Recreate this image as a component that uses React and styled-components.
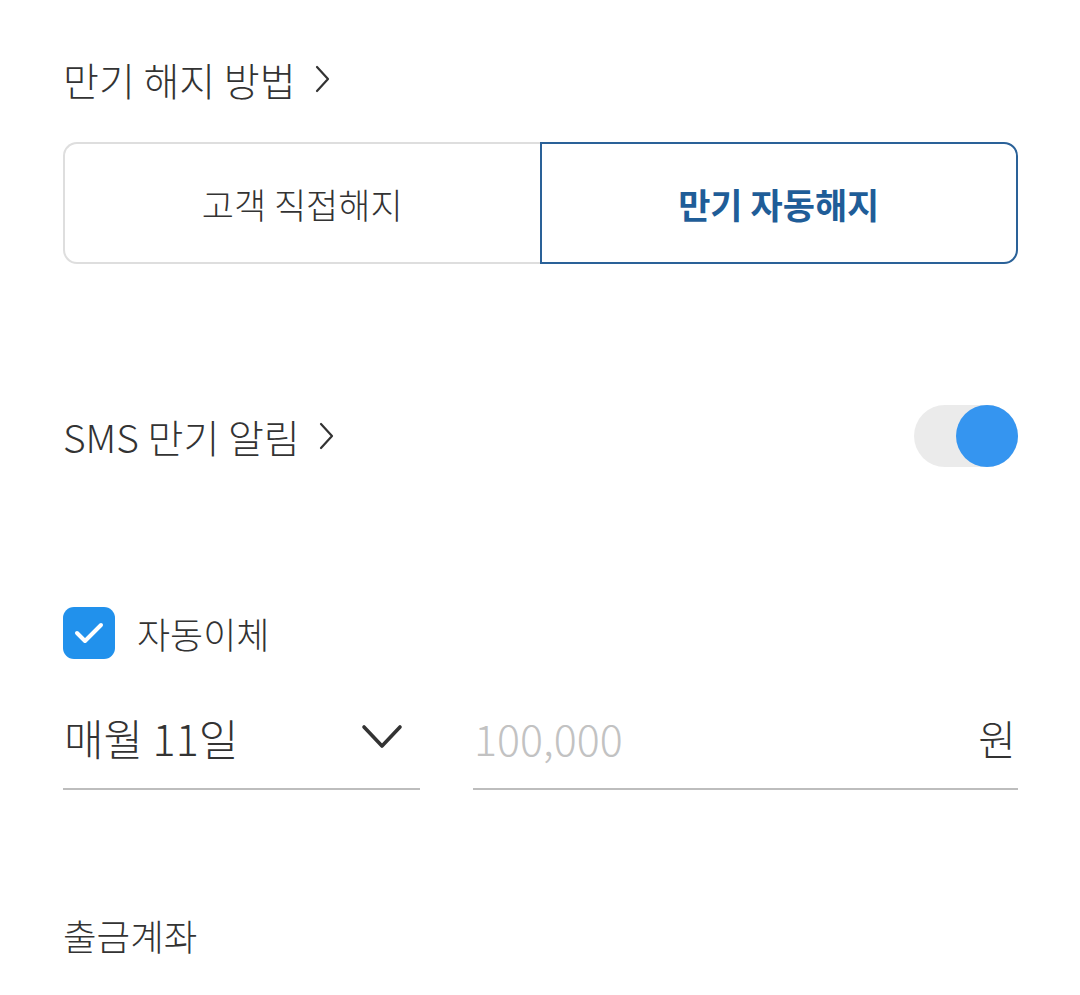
import React, { useState } from "react";
import styled, { createGlobalStyle } from "styled-components";

const Global = createGlobalStyle`
  html, body { margin: 0; padding: 0; background: #ffffff; }
  body { font-family: "Noto Sans CJK KR", "Noto Sans", sans-serif; color: #333333; }
  * { box-sizing: border-box; }
`;

const Page = styled.div`
  width: 1080px;
  padding: 52px 62px 40px 63px;
  display: flex;
  flex-direction: column;
`;

const SectionTitle = styled.div`
  display: flex;
  align-items: center;
  gap: 19px;
  height: 54px;
  font-size: 39px;
  font-weight: 300;
  line-height: 54px;
  color: #333333;
`;

const Segmented = styled.div`
  margin-top: 36px;
  display: flex;
  height: 122px;
`;

const SegButton = styled.button`
  flex: 1;
  height: 100%;
  background: #ffffff;
  font-family: "Noto Sans CJK KR", "Noto Sans", sans-serif;
  font-size: 35px;
  cursor: pointer;
  padding: 0;
  color: ${(p) => (p.$active ? "#1f5d98" : "#333333")};
  font-weight: ${(p) => (p.$active ? 700 : 300)};
  border: ${(p) => (p.$active ? "2px solid #2a6198" : "2px solid #dedede")};
  border-radius: ${(p) => (p.$side === "left" ? "14px 0 0 14px" : "0 14px 14px 0")};
  ${(p) => (p.$side === "left" ? "border-right: none;" : "")}
`;

const ToggleRow = styled.div`
  margin-top: 141px;
  display: flex;
  align-items: center;
  justify-content: space-between;
  height: 62px;
`;

const Toggle = styled.div`
  position: relative;
  width: 104px;
  height: 62px;
  border-radius: 31px;
  background: #ebebeb;
`;

const Knob = styled.div`
  position: absolute;
  top: 0;
  right: 0;
  width: 62px;
  height: 62px;
  border-radius: 50%;
  background: #3595f0;
`;

const CheckRow = styled.label`
  margin-top: 140px;
  display: flex;
  align-items: center;
  gap: 22px;
  height: 52px;
  font-size: 36px;
  font-weight: 300;
  color: #333333;
`;

const CheckBox = styled.span`
  width: 52px;
  height: 52px;
  border-radius: 11px;
  background: #2191ec;
  display: flex;
  align-items: center;
  justify-content: center;
`;

const FieldRow = styled.div`
  margin-top: 48px;
  display: grid;
  grid-template-columns: 357px 545px;
  column-gap: 53px;
`;

const Field = styled.div`
  display: flex;
  align-items: center;
  justify-content: space-between;
  height: 83px;
  padding-bottom: 21px;
  border-bottom: 2px solid #bdbdbd;
  font-size: 43px;
  font-weight: 300;
  line-height: 60px;
`;

const Value = styled.span`
  color: ${(p) => (p.$placeholder ? "#c2c2c2" : "#333333")};
  padding-left: 1px;
`;

const Unit = styled.span`
  color: #333333;
  font-size: 41px;
  padding-right: 2px;
`;

const ChevronDown = styled.svg`
  margin-right: 17px;
`;

const AccountTitle = styled.div`
  margin-top: 119px;
  font-size: 36.5px;
  font-weight: 300;
  line-height: 54px;
  color: #333333;
`;

const ChevronRight = () => (
  <svg width="16" height="28" viewBox="0 0 16 28" fill="none">
    <path d="M2 2 L13 14 L2 26" stroke="#333" strokeWidth="2.2" strokeLinecap="round" strokeLinejoin="round" />
  </svg>
);

export default function App() {
  const [mode, setMode] = useState("auto");
  return (
    <>
      <Global />
      <Page>
        <SectionTitle>
          <span>만기 해지 방법</span>
          <ChevronRight />
        </SectionTitle>
        <Segmented>
          <SegButton $side="left" $active={mode === "manual"} onClick={() => setMode("manual")}>
            고객 직접해지
          </SegButton>
          <SegButton $side="right" $active={mode === "auto"} onClick={() => setMode("auto")}>
            만기 자동해지
          </SegButton>
        </Segmented>

        <ToggleRow>
          <SectionTitle>
            <span>SMS 만기 알림</span>
            <ChevronRight />
          </SectionTitle>
          <Toggle>
            <Knob />
          </Toggle>
        </ToggleRow>

        <CheckRow>
          <CheckBox>
            <svg width="32" height="26" viewBox="0 0 32 26" fill="none">
              <path d="M4 13 L12 21 L28 5" stroke="#fff" strokeWidth="4" strokeLinecap="round" strokeLinejoin="round" />
            </svg>
          </CheckBox>
          <span>자동이체</span>
        </CheckRow>

        <FieldRow>
          <Field>
            <Value>매월 11일</Value>
            <ChevronDown width="42" height="26" viewBox="0 0 42 26" fill="none">
              <path d="M3 3 L21 22 L39 3" stroke="#333" strokeWidth="3.6" strokeLinecap="round" strokeLinejoin="round" />
            </ChevronDown>
          </Field>
          <Field>
            <Value $placeholder>100,000</Value>
            <Unit>원</Unit>
          </Field>
        </FieldRow>

        <AccountTitle>출금계좌</AccountTitle>
      </Page>
    </>
  );
}
